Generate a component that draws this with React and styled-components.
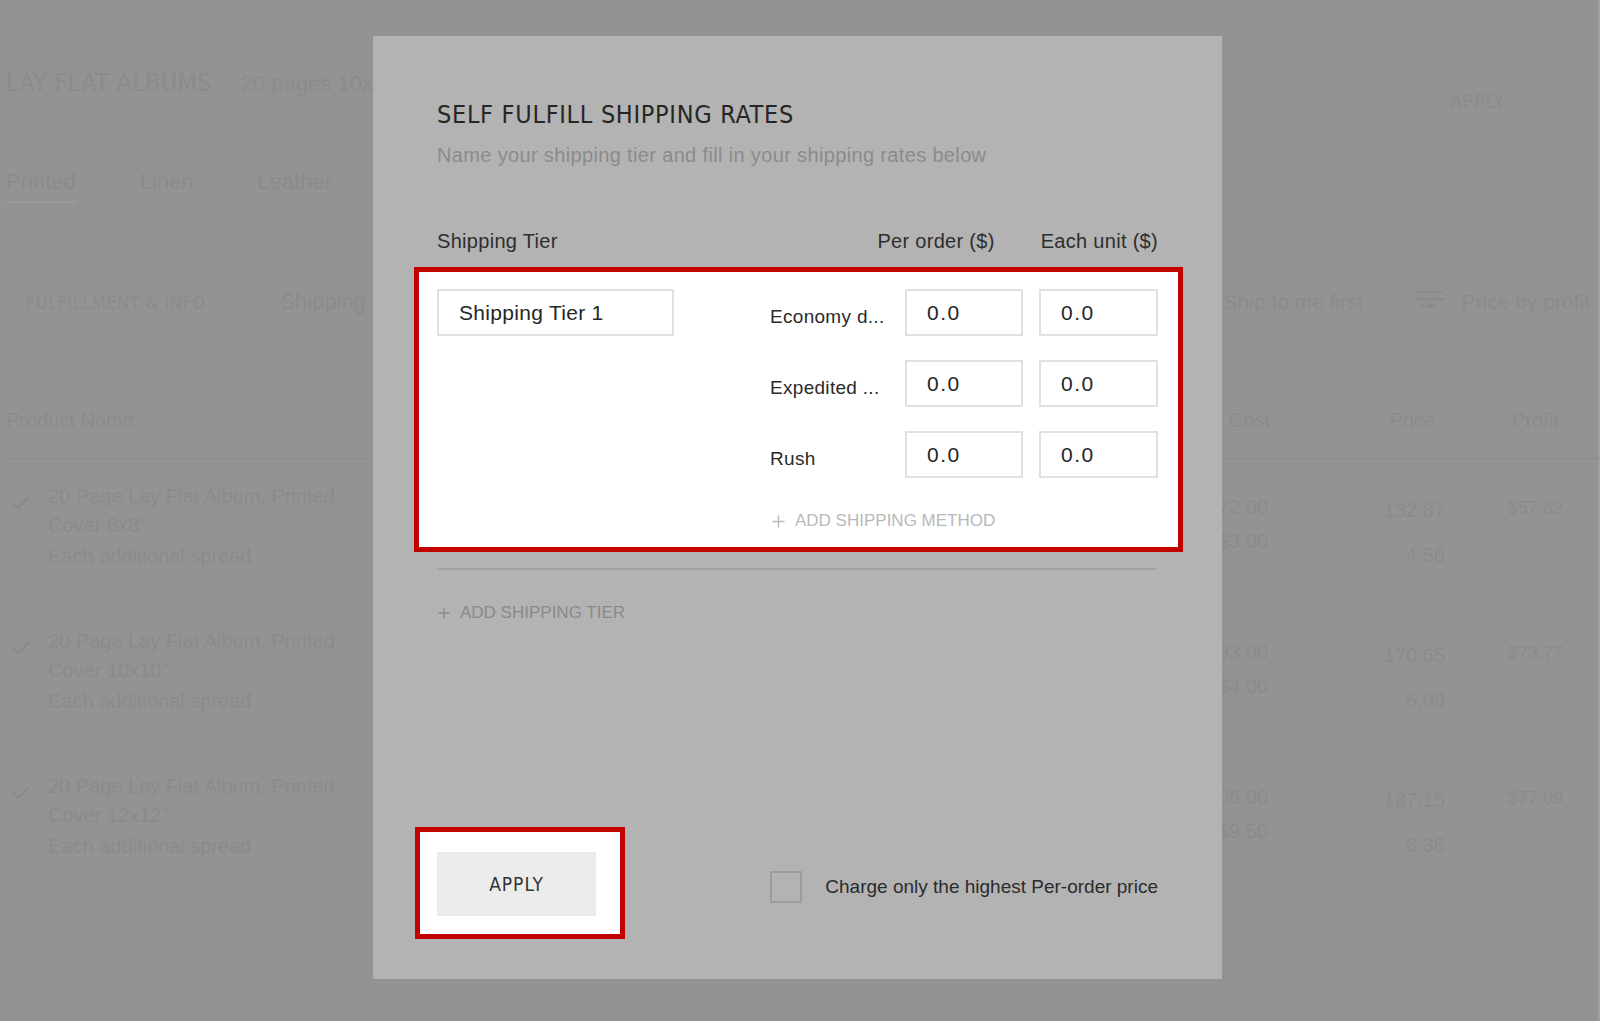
import React from "react";
import styled, { createGlobalStyle } from "styled-components";

const GlobalStyle = createGlobalStyle`
  html, body { margin: 0; padding: 0; background: #939393; }
  * { box-sizing: border-box; }
`;

const NARROW = `"Liberation Sans Narrow", "DejaVu Sans Condensed", "Liberation Sans", sans-serif`;
const SANS = `"Liberation Sans", Arial, sans-serif`;

/* ---------- dimmed page behind the dialog ---------- */
const Page = styled.div`
  position: relative;
  width: 1600px;
  height: 1021px;
  overflow: hidden;
  background: #939393;
  box-shadow: inset -2px 0 0 #9f9f9f;
  color: #8b8b8b;
  font-family: ${SANS};
`;

const PageContent = styled.div`
  padding-left: 6px;
`;

const HeaderBar = styled.header`
  display: flex;
  align-items: flex-start;
  padding: 67px 95px 0 0;
`;

const TitleGroup = styled.div`
  display: flex;
  align-items: baseline;
  gap: 29px;
`;

const PageTitle = styled.h1`
  margin: 0;
  font-family: ${NARROW};
  font-weight: 400;
  font-size: 25px;
  line-height: 32px;
  letter-spacing: 0.3px;
`;

const PageSubtitle = styled.span`
  font-size: 22px;
  line-height: 32px;
`;

const GhostApply = styled.span`
  margin: 22px 0 0 auto;
  font-family: ${NARROW};
  font-size: 19px;
  line-height: 24px;
  letter-spacing: 1px;
`;

const Tabs = styled.nav`
  display: flex;
  gap: 64px;
  margin-top: 56px;
`;

const Tab = styled.span`
  font-size: 22px;
  line-height: 26px;
  padding-bottom: 6px;
  border-bottom: 2px solid ${(p) => (p.$active ? "#9a9a9a" : "transparent")};
`;

const SectionBar = styled.div`
  display: flex;
  align-items: baseline;
  margin-top: 86px;
  padding-right: 10px;
  line-height: 26px;
`;

const SectionTitle = styled.span`
  margin-left: 20px;
  font-family: ${NARROW};
  font-size: 18px;
  letter-spacing: 0.5px;
`;

const SectionTab = styled.span`
  margin-left: 75px;
  font-size: 22px;
`;

const SectionTools = styled.div`
  margin-left: auto;
  display: flex;
  align-items: baseline;
  font-size: 21px;
`;

const ToolIcon = styled.svg`
  margin: 0 18px -3px 50px;
`;

const COLUMNS = "1150px 112px 177px 1fr";

const TableHead = styled.div`
  display: grid;
  grid-template-columns: ${COLUMNS};
  margin-top: 92px;
  padding-bottom: 26px;
  border-bottom: 1px solid #8d8d8d;
  font-size: 20px;
  line-height: 24px;
`;

const HeadCell = styled.span`
  text-align: ${(p) => p.$align || "left"};
  padding-left: ${(p) => p.$pl || 0}px;
  padding-right: ${(p) => p.$pr || 0}px;
  white-space: nowrap;
`;

const TableBody = styled.div`
  margin-top: 12px;
`;

const Row = styled.div`
  display: grid;
  grid-template-columns: ${COLUMNS};
  height: 145px;
  font-size: 20px;
`;

const NameCell = styled.div`
  display: flex;
  align-items: flex-start;
`;

const Check = styled.svg`
  margin: 25px 0 0 6px;
  flex: none;
`;

const NameText = styled.div`
  margin-left: 18px;
  padding-top: 11px;
  width: 300px;
  line-height: 28.5px;
`;

const NameLine = styled.div``;

const NameSub = styled.div`
  margin-top: 3px;
`;

const ValueCell = styled.div`
  text-align: ${(p) => p.$align || "right"};
  padding-top: ${(p) => p.$pt}px;
  padding-left: ${(p) => p.$pl || 0}px;
  line-height: ${(p) => p.$lh}px;
  font-size: ${(p) => p.$fs || 20}px;
  white-space: nowrap;
`;

/* ---------- dialog ---------- */
const Dialog = styled.section`
  position: absolute;
  left: 373px;
  top: 36px;
  width: 849px;
  height: 943px;
  padding: 63px 64px 40px;
  background: #b3b3b3;
  display: flex;
  flex-direction: column;
  color: #2a2a2a;
  font-family: ${SANS};
`;

const DialogTitle = styled.h2`
  margin: 0;
  font-family: ${NARROW};
  font-weight: 400;
  font-size: 25px;
  line-height: 32px;
  letter-spacing: 0.7px;
  color: #262626;
`;

const DialogSubtitle = styled.p`
  margin: 12px 0 0;
  font-size: 20px;
  line-height: 24px;
  letter-spacing: 0.35px;
  color: #8b8b8b;
`;

const ColumnHeader = styled.div`
  display: flex;
  margin-top: 62px;
  font-size: 20px;
  line-height: 24px;
  letter-spacing: 0.3px;
  color: #2e2e2e;
`;

const ColumnLabel = styled.span`
  flex: ${(p) => (p.$grow ? 1 : "none")};
  margin-left: ${(p) => p.$ml || 0}px;
`;

const TierBox = styled.div`
  margin: 14px -25px 0 -23px;
  border: 5px solid #c20000;
  background: #ffffff;
  padding: 17px 20px 16px 18px;
  display: flex;
  justify-content: space-between;
  align-items: flex-start;
`;

const Field = styled.input`
  width: ${(p) => p.$w}px;
  height: 47px;
  border: 2px solid #e1e1e1;
  padding: 0 0 0 20px;
  margin: 0;
  background: #ffffff;
  font-family: ${SANS};
  font-size: 21px;
  letter-spacing: ${(p) => p.$ls || 0.3}px;
  color: #262626;
  outline: none;
`;

const Methods = styled.div`
  width: 388px;
  display: flex;
  flex-direction: column;
  gap: 24px;
`;

const MethodRow = styled.div`
  display: flex;
  align-items: center;
  gap: 16px;
`;

const MethodLabel = styled.span`
  width: 119px;
  padding-top: 8px;
  font-size: 19px;
  line-height: 24px;
  letter-spacing: 0.3px;
  color: #2a2a2a;
  white-space: nowrap;
  overflow: hidden;
`;

const AddLink = styled.div`
  display: flex;
  align-items: center;
  gap: 10px;
  margin: ${(p) => p.$mt}px 0 0 ${(p) => p.$ml || 0}px;
  font-size: 17px;
  line-height: 20px;
  color: ${(p) => p.$color};
`;

const Divider = styled.hr`
  margin: 16px 2px 0 0;
  border: none;
  height: 2px;
  background: #a1a1a1;
`;

const Footer = styled.div`
  margin-top: auto;
  display: flex;
  align-items: center;
  justify-content: space-between;
`;

const ApplyFrame = styled.div`
  margin-left: -22px;
  border: 5px solid #c20000;
  background: #ffffff;
  padding: 20px 24px 18px 17px;
`;

const ApplyButton = styled.button`
  display: block;
  width: 159px;
  height: 64px;
  border: none;
  background: #ececec;
  font-family: ${NARROW};
  font-size: 19px;
  letter-spacing: 1px;
  color: #333333;
  padding: 0;
`;

const ChargeOption = styled.label`
  display: flex;
  align-items: center;
  gap: 23px;
  margin-top: 8px;
`;

const CheckBox = styled.span`
  width: 32px;
  height: 32px;
  border: 2px solid #9c9c9c;
`;

const ChargeText = styled.span`
  font-size: 19px;
  line-height: 24px;
  color: #2b2b2b;
`;

const Plus = ({ size = 13, color }) => (
  <svg width={size} height={size} viewBox="0 0 13 13">
    <path d="M6.5 0.5v12M0.5 6.5h12" stroke={color} strokeWidth="1.4" fill="none" />
  </svg>
);

const rows = [
  { size: '8x8"', costs: ["$72.00", "$3.00"], prices: ["132.87", "4.56"], profit: "$57.82" },
  { size: '10x10"', costs: ["$93.00", "$4.00"], prices: ["170.65", "6.08"], profit: "$73.77" },
  { size: '12x12"', costs: ["$106.00", "$9.50"], prices: ["187.15", "8.36"], profit: "$77.09" },
];

const methods = ["Economy d...", "Expedited ...", "Rush"];

export default function App() {
  return (
    <>
      <GlobalStyle />
      <Page>
        <PageContent>
          <HeaderBar>
            <TitleGroup>
              <PageTitle>LAY FLAT ALBUMS</PageTitle>
              <PageSubtitle>20 pages 10x10"</PageSubtitle>
            </TitleGroup>
            <GhostApply>APPLY</GhostApply>
          </HeaderBar>
          <Tabs>
            <Tab $active>Printed</Tab>
            <Tab>Linen</Tab>
            <Tab>Leather</Tab>
          </Tabs>
          <SectionBar>
            <SectionTitle>FULFILLMENT &amp; INFO</SectionTitle>
            <SectionTab>Shipping</SectionTab>
            <SectionTools>
              <span>Ship to me first</span>
              <ToolIcon width="30" height="20" viewBox="0 0 30 20">
                <g stroke="#888888" strokeWidth="1.3" fill="none">
                  <path d="M2 3h26M0 10h30M6 17h16" />
                  <circle cx="16" cy="17" r="2" />
                </g>
              </ToolIcon>
              <span>Price by profit</span>
            </SectionTools>
          </SectionBar>
          <TableHead>
            <HeadCell>Product Name</HeadCell>
            <HeadCell $pl={73}>Cost</HeadCell>
            <HeadCell $align="right" $pr={10}>Price</HeadCell>
            <HeadCell $pl={67}>Profit</HeadCell>
          </TableHead>
          <TableBody>
            {rows.map((r) => (
              <Row key={r.size}>
                <NameCell>
                  <Check width="18" height="14" viewBox="0 0 18 14">
                    <path d="M1 7l5 5L17 1" stroke="#878787" strokeWidth="1.6" fill="none" />
                  </Check>
                  <NameText>
                    <NameLine>20 Page Lay Flat Album, Printed</NameLine>
                    <NameLine>Cover {r.size}</NameLine>
                    <NameSub>Each additional spread</NameSub>
                  </NameText>
                </NameCell>
                <ValueCell $pt={19} $lh={34}>
                  <div>{r.costs[0]}</div>
                  <div>{r.costs[1]}</div>
                </ValueCell>
                <ValueCell $pt={17} $lh={45}>
                  <div>{r.prices[0]}</div>
                  <div>{r.prices[1]}</div>
                </ValueCell>
                <ValueCell $align="left" $pl={63} $pt={20} $lh={34} $fs={18}>
                  {r.profit}
                </ValueCell>
              </Row>
            ))}
          </TableBody>
        </PageContent>

        <Dialog>
          <DialogTitle>SELF FULFILL SHIPPING RATES</DialogTitle>
          <DialogSubtitle>Name your shipping tier and fill in your shipping rates below</DialogSubtitle>
          <ColumnHeader>
            <ColumnLabel $grow>Shipping Tier</ColumnLabel>
            <ColumnLabel>Per order ($)</ColumnLabel>
            <ColumnLabel $ml={46}>Each unit ($)</ColumnLabel>
          </ColumnHeader>
          <TierBox>
            <Field $w={237} defaultValue="Shipping Tier 1" />
            <Methods>
              {methods.map((m) => (
                <MethodRow key={m}>
                  <MethodLabel>{m}</MethodLabel>
                  <Field $w={118} $ls={1.5} defaultValue="0.0" />
                  <Field $w={119} $ls={1.5} defaultValue="0.0" />
                </MethodRow>
              ))}
              <AddLink $mt={9} $ml={2} $color="#b9b9b9">
                <Plus color="#b9b9b9" />
                ADD SHIPPING METHOD
              </AddLink>
            </Methods>
          </TierBox>
          <Divider />
          <AddLink $mt={33} $ml={1} $color="#8a8a8a">
            <Plus size={12} color="#8a8a8a" />
            ADD SHIPPING TIER
          </AddLink>
          <Footer>
            <ApplyFrame>
              <ApplyButton>APPLY</ApplyButton>
            </ApplyFrame>
            <ChargeOption>
              <CheckBox />
              <ChargeText>Charge only the highest Per-order price</ChargeText>
            </ChargeOption>
          </Footer>
        </Dialog>
      </Page>
    </>
  );
}
